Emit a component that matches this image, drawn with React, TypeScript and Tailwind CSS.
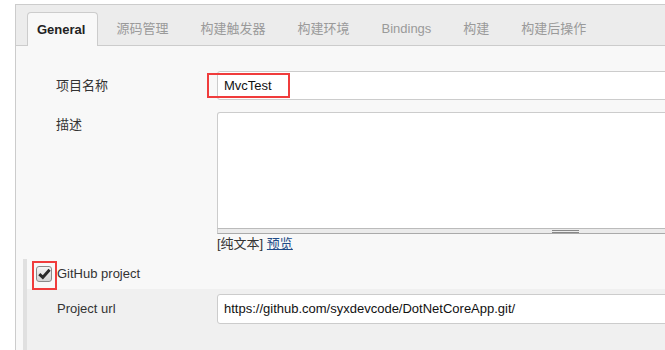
import React from "react";

const tabs = ["源码管理", "构建触发器", "构建环境", "Bindings", "构建", "构建后操作"];

export default function App() {
  return (
    <div className="w-[665px] h-[350px] overflow-hidden bg-white pt-[4px] pl-[15px] font-['Liberation_Sans','Noto_Sans_CJK_SC',sans-serif] text-[13px] text-[#333]">
      <div className="w-[700px] h-[360px] border-l border-t border-[#cccccc] bg-[#f8f8f8]">
        {/* Tab bar */}
        <div className="flex items-end h-[41px] bg-[#ececec] border-b border-[#cccccc] pl-[11px]">
          <div className="h-[34px] -mb-px flex items-center rounded-t-[4px] border border-b-0 border-[#cccccc] bg-[#f8f8f8] pl-[9px] pr-[12px] font-bold text-[#222]">
            General
          </div>
          <div className="flex ml-[2px]">
            {tabs.map((t) => (
              <div key={t} className="h-[33px] flex items-center px-[16px] text-[#9a9a9a]">
                {t}
              </div>
            ))}
          </div>
        </div>

        {/* Form */}
        <div className="pt-[25px]">
          {/* 项目名称 */}
          <div className="flex items-center h-[29px]">
            <div className="w-[201px] pl-[40px]">项目名称</div>
            <div className="relative">
              <div className="w-[470px] h-[29px] flex items-center border border-[#cccccc] rounded-[3px] bg-white pl-[6px] text-[#111]">
                MvcTest
              </div>
              <div className="absolute left-[-10px] top-[2px] w-[83px] h-[25px] border-2 border-[#f03c3c]" />
            </div>
          </div>

          {/* 描述 */}
          <div className="flex items-start mt-[12px]">
            <div className="w-[201px] pl-[40px] pt-[5px] leading-[16px]">描述</div>
            <div className="w-[470px]">
              <div className="h-[117px] border border-[#cccccc] border-b-[#bbbbbb] rounded-t-[3px] bg-white" />
              <div className="relative h-[5px] bg-[#ebebeb] border-b border-[#aaaaaa] border-x border-x-[#cccccc]">
                <div className="absolute left-[334px] top-[1px] w-[27px] h-[3px] border-t border-b border-[#888888]" />
              </div>
              <div className="mt-[2px] leading-[16px] text-[#333]">
                [纯文本] <span className="text-[#204a87] underline">预览</span>
              </div>
            </div>
          </div>

          {/* GitHub project */}
          <div className="mt-[7px] ml-[7px] border-l-4 border-[#e0e0e0]">
            <div className="flex items-center h-[30px]">
              <div className="relative ml-[9px]">
                <div className="w-[16px] h-[16px] rounded-[3px] border border-[#8a8a8a] bg-gradient-to-b from-[#f4f4f4] to-[#d4d4d4] flex items-center justify-center">
                  <svg width="13" height="12" viewBox="0 0 13 12">
                    <path d="M1.3 6.2 L4.8 9.4 L11.6 1.8" fill="none" stroke="#2a2a2a" strokeWidth="3" strokeLinecap="butt" strokeLinejoin="miter" />
                  </svg>
                </div>
                <div className="absolute left-[-4px] top-[-5px] w-[25px] h-[29px] border-2 border-[#f03c3c]" />
              </div>
              <div className="ml-[5px] text-[#333]">GitHub project</div>
            </div>
            <div className="bg-[#f0f0f0] h-[80px] pt-[5px]">
              <div className="flex items-center h-[30px]">
                <div className="w-[190px] pl-[30px]">Project url</div>
                <div className="w-[470px] h-[30px] flex items-center border border-[#cccccc] rounded-[3px] bg-white pl-[6px] text-[#111]">
                  https://github.com/syxdevcode/DotNetCoreApp.git/
                </div>
              </div>
            </div>
          </div>
        </div>
      </div>
    </div>
  );
}
